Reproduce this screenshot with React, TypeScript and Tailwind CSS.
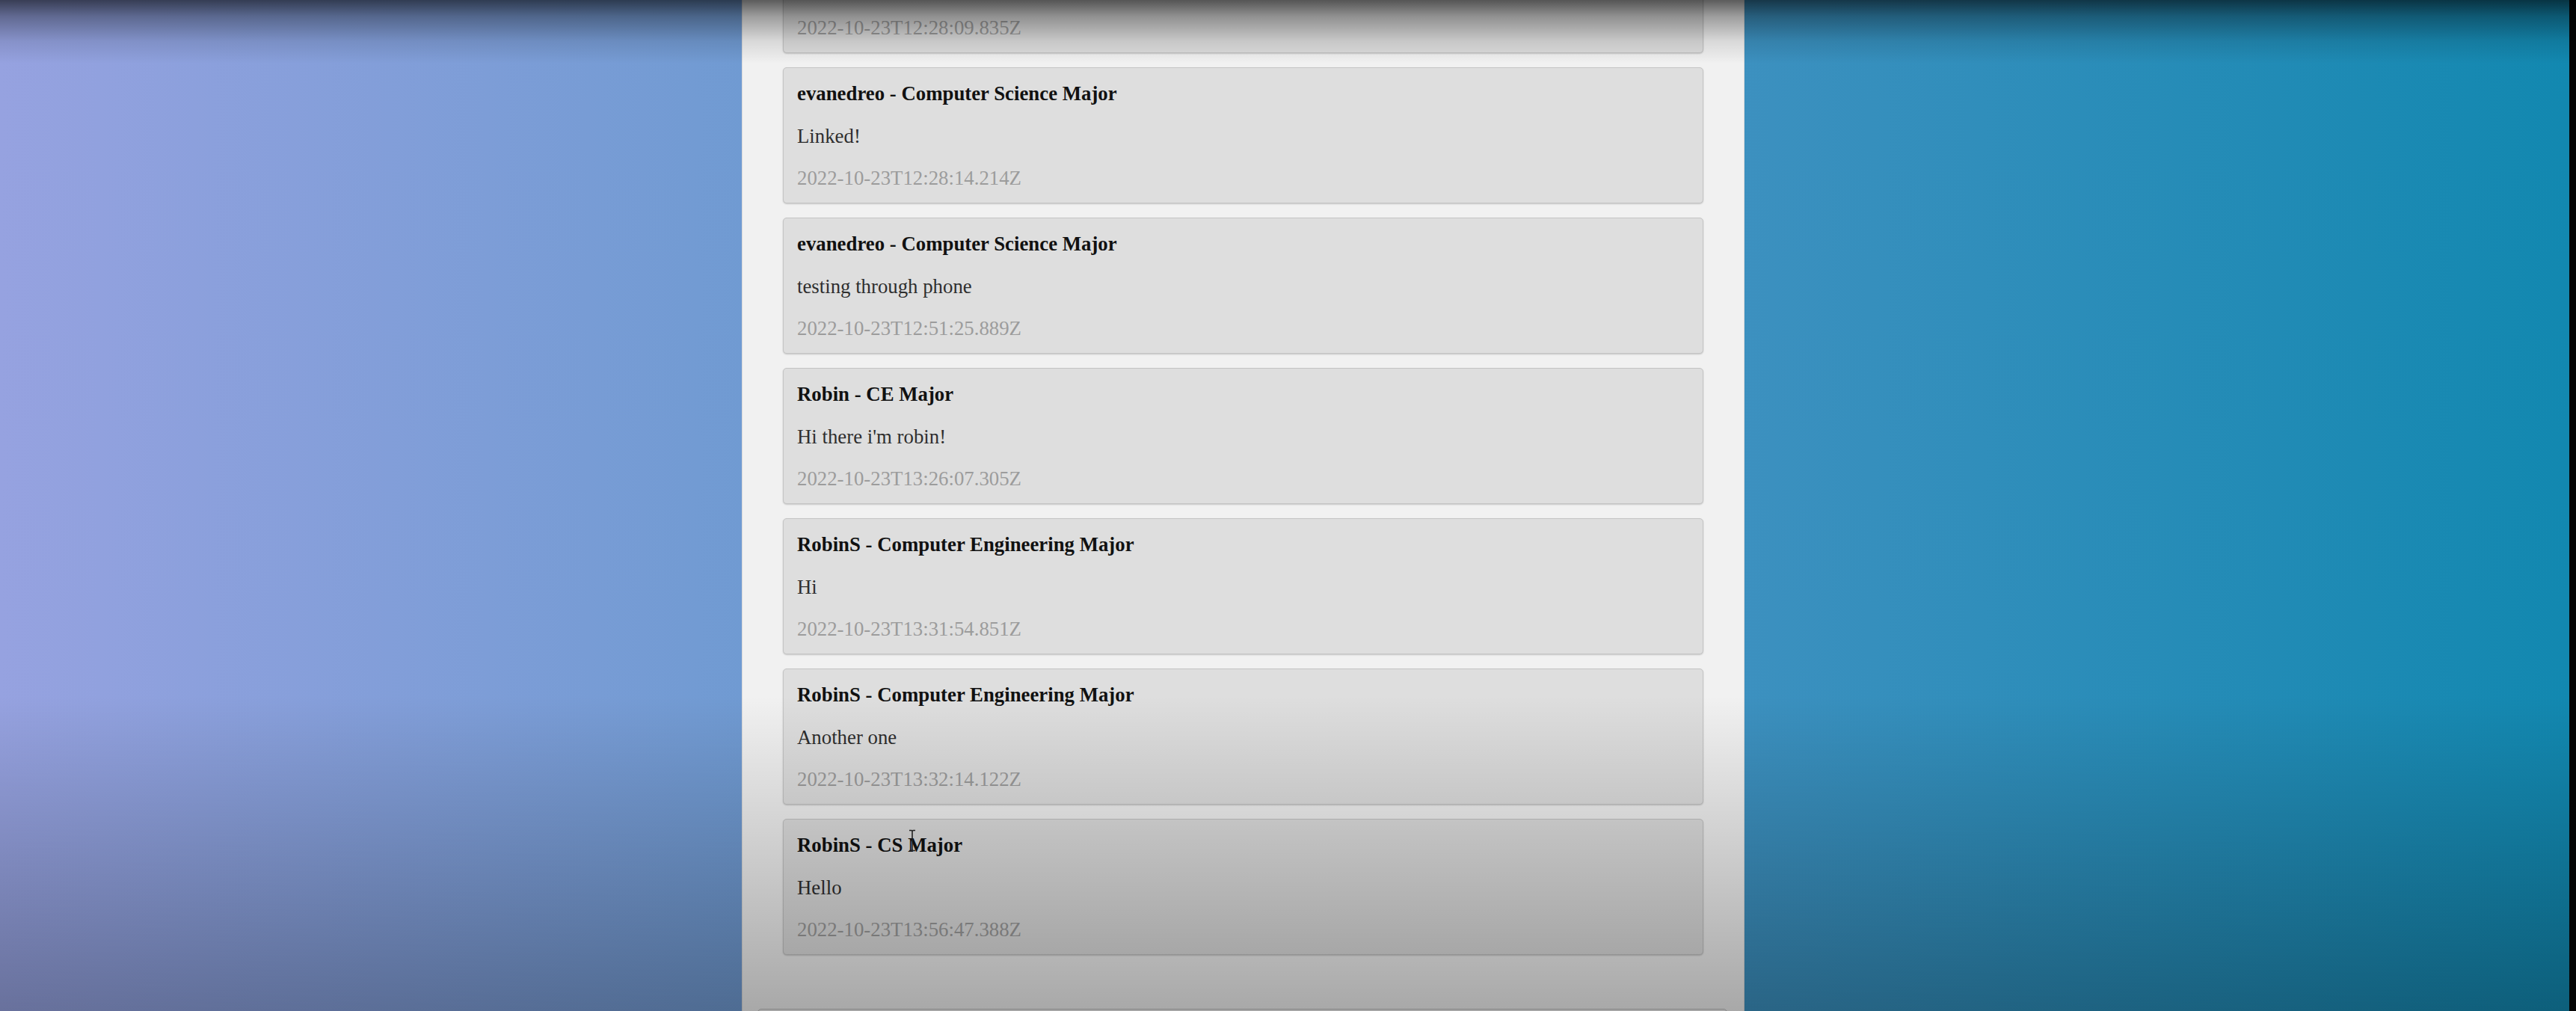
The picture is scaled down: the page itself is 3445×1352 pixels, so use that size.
import React from "react";

type Post = { author: string; body: string; time: string };

const posts: Post[] = [
  { author: "evanedreo - Computer Science Major", body: "Linking", time: "2022-10-23T12:28:09.835Z" },
  { author: "evanedreo - Computer Science Major", body: "Linked!", time: "2022-10-23T12:28:14.214Z" },
  { author: "evanedreo - Computer Science Major", body: "testing through phone", time: "2022-10-23T12:51:25.889Z" },
  { author: "Robin - CE Major", body: "Hi there i'm robin!", time: "2022-10-23T13:26:07.305Z" },
  { author: "RobinS - Computer Engineering Major", body: "Hi", time: "2022-10-23T13:31:54.851Z" },
  { author: "RobinS - Computer Engineering Major", body: "Another one", time: "2022-10-23T13:32:14.122Z" },
  { author: "RobinS - CS Major", body: "Hello", time: "2022-10-23T13:56:47.388Z" },
];

function Card({ p }: { p: Post }) {
  return (
    <div className="flex flex-col gap-[26.5px] rounded-[5px] border border-[#c4c4c4] bg-[#dedede] px-[18px] pb-[18px] pt-[19px] shadow-[0_1px_2px_rgba(0,0,0,0.18)] font-['Liberation_Serif',serif] text-[26.8px] leading-[30px]">
      <p className="font-bold text-[#111111]">{p.author}</p>
      <p className="text-[#2e2e2e]">{p.body}</p>
      <p className="text-[#9c9c9c]">{p.time}</p>
    </div>
  );
}

export default function App() {
  return (
    <div className="relative flex h-[1352px] w-full overflow-hidden bg-black">
      <div className="flex flex-1 bg-[linear-gradient(to_right,#96a2e0,#1288b0)]">
        <div className="w-[992px] shrink-0" />
        <div className="w-[1341px] shrink-0 overflow-hidden border-x border-[#d9d9d9] bg-[#f1f1f1] px-[54px]">
          <div className="mt-[-111px] flex flex-col gap-[19px]">
            {posts.map((p, i) => (
              <Card key={i} p={p} />
            ))}
            <div className="ml-[-34px] mt-[53px] h-[60px] w-[1297px] rounded-t-[5px] border border-[#bcbcbc] bg-[#ececec]" />
          </div>
        </div>
        <div className="flex-1" />
      </div>
      <div className="w-[9px] shrink-0 bg-[#050505]" />

      {/* vignette from the video frame */}
      <div className="pointer-events-none absolute inset-0 bg-[linear-gradient(to_bottom,rgba(0,0,0,0.62)_0px,rgba(0,0,0,0.35)_22px,rgba(0,0,0,0.1)_55px,rgba(0,0,0,0)_85px,rgba(0,0,0,0)_930px,rgba(0,0,0,0.3)_1352px)]" />

      {/* text cursor */}
      <svg
        className="pointer-events-none absolute left-[1213px] top-[1109px]"
        width="14"
        height="30"
        viewBox="0 0 14 30"
      >
        <path d="M3 1.5h3l1 1 1-1h3M7 2.5v25M3 28.5h3l1-1 1 1h3" stroke="#222" strokeWidth="1.6" fill="none" />
      </svg>
    </div>
  );
}
